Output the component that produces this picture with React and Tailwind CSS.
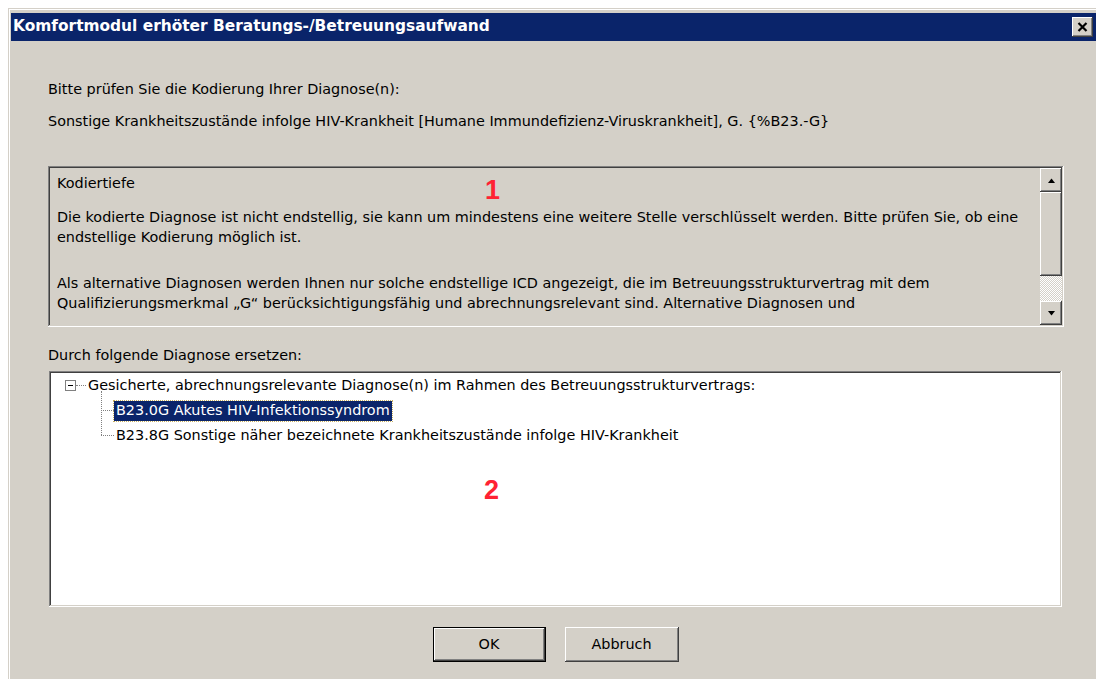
import React from "react";

// Klassische Win-Bevels als Schatten
const raised =
  "shadow-[inset_-1px_-1px_#404040,inset_1px_1px_#ffffff,inset_-2px_-2px_#808080,inset_2px_2px_#d4d0c8]";
const sunken =
  "shadow-[inset_-1px_-1px_#ffffff,inset_1px_1px_#808080,inset_-2px_-2px_#d4d0c8,inset_2px_2px_#404040]";

const Arrow = ({ down }) => (
  <svg width="9" height="5" viewBox="0 0 9 5">
    {down ? (
      <polygon points="1,0 8,0 4.5,4.5" fill="#000" />
    ) : (
      <polygon points="4.5,0.5 8,5 1,5" fill="#000" />
    )}
  </svg>
);

// Senkrechte Bildlaufleiste im Hinweisfeld
const ScrollBar = () => (
  <div className="flex w-[22px] flex-col">
    <div className={`flex h-[24px] items-center justify-center bg-[#d4d0c8] ${raised}`}>
      <Arrow />
    </div>
    <div className={`h-[84px] bg-[#d4d0c8] ${raised}`} />
    <div className="h-[25px] bg-[repeating-conic-gradient(#d4d0c8_0_25%,#ffffff_0_50%)] bg-[length:2px_2px]" />
    <div className={`flex h-[24px] items-center justify-center bg-[#d4d0c8] ${raised}`}>
      <Arrow down />
    </div>
  </div>
);

const Kind = ({ label, selected }) => (
  <div className="flex h-[25px] items-center pl-[50px]">
    <div className="w-[13px] border-t border-dotted border-[#808080]" />
    {selected ? (
      <span className="flex h-[20px] items-center bg-[#0a246a] px-[2px] text-white outline outline-1 outline-dotted outline-[#c8b060]">
        {label}
      </span>
    ) : (
      <span className="px-[2px]">{label}</span>
    )}
  </div>
);

const App = () => {
  return (
    <div className="relative h-[679px] w-[1096px] overflow-hidden bg-white pl-2 pt-2 text-[14.4px] text-black [font-family:'DejaVu_Sans',sans-serif]">
      <div className="h-full w-[1088px] border-l border-t border-[#d4d0c8] bg-[#d4d0c8]">
        <div className="h-full border-l border-t border-white pl-[1px] pt-[3px]">
          {/* Titelleiste */}
          <div className="flex h-[28px] items-center justify-between bg-[#0a246a] pl-[2px] pr-[3px]">
            <span className="text-[15.4px] font-bold text-white">
              Komfortmodul erhöter Beratungs-/Betreuungsaufwand
            </span>
            <div className={`flex h-[20px] w-[21px] items-center justify-center bg-[#d4d0c8] ${raised}`}>
              <svg width="11" height="10" viewBox="0 0 11 10">
                <path d="M1.5 1 L9.5 9 M9.5 1 L1.5 9" stroke="#000" strokeWidth="2.2" />
              </svg>
            </div>
          </div>

          <div className="pl-[37px]">
            <p className="mt-[38px] leading-[20px]">Bitte prüfen Sie die Kodierung Ihrer Diagnose(n):</p>
            <p className="mt-[12px] leading-[20px]">
              Sonstige Krankheitszustände infolge HIV-Krankheit [Humane Immundefizienz-Viruskrankheit], G. {"{%B23.-G}"}
            </p>

            {/* Hinweis Kodiertiefe */}
            <div className={`mt-[35px] flex h-[161px] w-[1016px] bg-[#d4d0c8] p-[2px] ${sunken}`}>
              <div className="flex-1 overflow-hidden whitespace-nowrap pl-[7px] pt-[5px] leading-[20px]">
                <p>Kodiertiefe</p>
                <p className="mt-[14px]">
                  Die kodierte Diagnose ist nicht endstellig, sie kann um mindestens eine weitere Stelle verschlüsselt werden. Bitte prüfen Sie, ob eine
                  <br />
                  endstellige Kodierung möglich ist.
                </p>
                <p className="mt-[26px]">
                  Als alternative Diagnosen werden Ihnen nur solche endstellige ICD angezeigt, die im Betreuungsstrukturvertrag mit dem
                  <br />
                  Qualifizierungsmerkmal „G“ berücksichtigungsfähig und abrechnungsrelevant sind. Alternative Diagnosen und
                </p>
              </div>
              <ScrollBar />
            </div>

            <p className="mt-[18px] leading-[20px]">Durch folgende Diagnose ersetzen:</p>

            {/* Baumansicht */}
            <div className={`ml-[1px] mt-[6px] h-[236px] w-[1013px] bg-white p-[2px] ${sunken}`}>
              <div className="flex h-[25px] items-center pl-[14px]">
                <div className="flex h-[11px] w-[11px] items-center justify-center border border-[#808080] bg-white">
                  <div className="h-px w-[5px] bg-black" />
                </div>
                <div className="w-[10px] border-t border-dotted border-[#808080]" />
                <span className="pl-[2px]">
                  Gesicherte, abrechnungsrelevante Diagnose(n) im Rahmen des Betreuungsstrukturvertrags:
                </span>
              </div>
              <div className="relative">
                <div className="absolute left-[50px] top-[-7px] h-[44px] border-l border-dotted border-[#808080]" />
                <Kind label="B23.0G Akutes HIV-Infektionssyndrom" selected />
                <Kind label="B23.8G Sonstige näher bezeichnete Krankheitszustände infolge HIV-Krankheit" />
              </div>
            </div>

            <div className="ml-[1px] mt-[20px] flex w-[1013px] justify-center gap-[19px]">
              <div className="border border-black">
                <div className={`flex h-[33px] w-[111px] items-center justify-center bg-[#d4d0c8] ${raised}`}>OK</div>
              </div>
              <div className={`flex h-[35px] w-[114px] items-center justify-center bg-[#d4d0c8] ${raised}`}>Abbruch</div>
            </div>
          </div>
        </div>
      </div>

      {/* Markierungen */}
      <span className="absolute left-[485px] top-[170px] text-[27px] font-bold text-[#ff2233] [font-family:'Liberation_Sans',sans-serif]">
        1
      </span>
      <span className="absolute left-[484px] top-[470px] text-[27px] font-bold text-[#ff2233] [font-family:'Liberation_Sans',sans-serif]">
        2
      </span>
    </div>
  );
};

export default App;
